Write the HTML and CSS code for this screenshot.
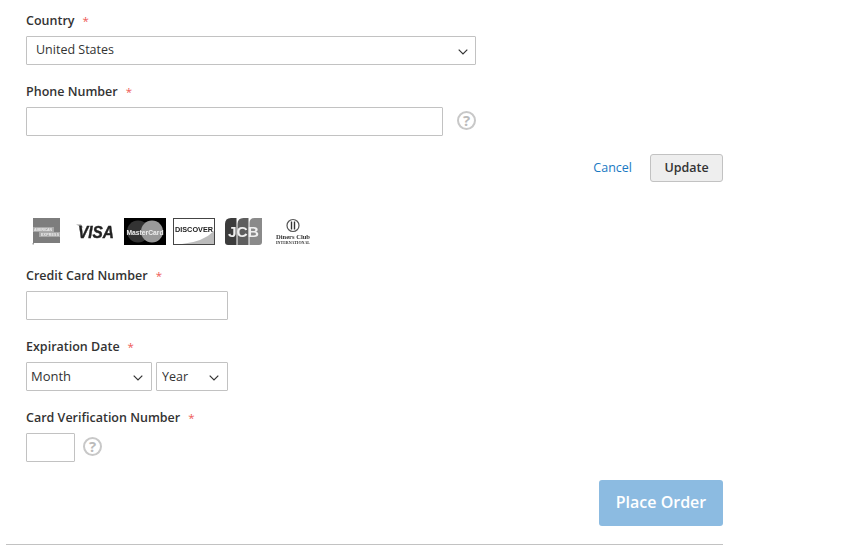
FILE: index.html
```html
<!DOCTYPE html>
<html lang="en">
<head>
<meta charset="utf-8">
<title>Checkout</title>
<link rel="stylesheet" href="styles.css">
</head>
<body>
<main class="checkout">
  <div class="field">
    <label class="label">Country</label>
    <div class="select-wrap select-country">
      <select class="select"><option>United States</option></select>
      <svg class="chevron" viewBox="0 0 10 6"><path d="M.7.7 5 5 9.3.7" fill="none" stroke="#333" stroke-width="1.2"/></svg>
    </div>
  </div>
  <div class="field">
    <label class="label">Phone Number</label>
    <div class="with-help">
      <input class="input input-phone" type="text">
      <span class="help">?</span>
    </div>
  </div>
  <div class="actions">
    <a class="cancel">Cancel</a>
    <button class="update" type="button">Update</button>
  </div>
  <div class="cards">
    <svg class="card" viewBox="0 0 49 27">
      <rect x="7" y="0" width="27" height="25" fill="#7d7d7d"/>
      <rect x="6.500" y="25" width="1.500" height="1.500" fill="#999"/>
      <rect x="7" y="9" width="21" height="5" fill="#a8a8a8"/>
      <rect x="13" y="14" width="21" height="5" fill="#a8a8a8"/>
      <text class="amex-t" x="8" y="13" textLength="18">AMERICAN</text>
      <text class="amex-t" x="15" y="18" textLength="18">EXPRESS</text>
    </svg>
    <svg class="card" viewBox="0 0 49 27">
      <path d="M1 6.500h5l2.500 3.500z" fill="#999"/>
      <text class="visa-t" x="3" y="20" textLength="36" lengthAdjust="spacingAndGlyphs">VISA</text>
    </svg>
    <svg class="card" viewBox="0 0 49 27">
      <rect width="42" height="27" fill="#000"/>
      <circle cx="14" cy="13.500" r="11" fill="#333"/>
      <circle cx="28" cy="13.500" r="11" fill="#999"/>
      <text class="mc-t" x="2.500" y="16.500" textLength="37" lengthAdjust="spacingAndGlyphs">MasterCard</text>
    </svg>
    <svg class="card" viewBox="0 0 49 27">
      <rect x=".5" y=".5" width="41" height="26" fill="#fff" stroke="#444"/>
      <path d="M41 13V26H9Q30 24 41 13z" fill="#bbb"/>
      <text class="disc-t" x="2" y="14" textLength="38" lengthAdjust="spacingAndGlyphs">DISCOVER</text>
    </svg>
    <svg class="card" viewBox="0 0 49 27">
      <path d="M3 6q0-6 6-6h5.500v27H6q-3 0-3-3z" fill="#3c3c3c"/>
      <path d="M15.500 6q0-6 6-6h5v27h-11z" fill="#5e5e5e"/>
      <path d="M27.500 5q0-5 5-5H40v24q0 3-3 3h-9.500z" fill="#8a8a8a"/>
      <text class="jcb-t" x="6" y="18.500" textLength="31" lengthAdjust="spacingAndGlyphs">JCB</text>
    </svg>
    <svg class="card" viewBox="0 0 49 27">
      <circle cx="22" cy="7.500" r="6" fill="#fff" stroke="#555" stroke-width="1.200"/>
      <rect x="19.800" y="3.500" width="1.400" height="8" fill="#333"/>
      <rect x="22.800" y="3.500" width="1.400" height="8" fill="#333"/>
      <text class="din-t" x="5" y="20.500" textLength="34" lengthAdjust="spacingAndGlyphs">Diners Club</text>
      <text class="int-t" x="5" y="25.500" textLength="34" lengthAdjust="spacingAndGlyphs">INTERNATIONAL</text>
    </svg>
  </div>
  <div class="field field-cc">
    <label class="label">Credit Card Number</label>
    <input class="input input-cc" type="text">
  </div>
  <div class="field">
    <label class="label">Expiration Date</label>
    <div class="date-row">
      <div class="select-wrap select-month">
        <select class="select select-small"><option>Month</option></select>
        <svg class="chevron" viewBox="0 0 10 6"><path d="M.7.7 5 5 9.3.7" fill="none" stroke="#333" stroke-width="1.2"/></svg>
      </div>
      <div class="select-wrap select-year">
        <select class="select select-small"><option>Year</option></select>
        <svg class="chevron" viewBox="0 0 10 6"><path d="M.7.7 5 5 9.3.7" fill="none" stroke="#333" stroke-width="1.2"/></svg>
      </div>
    </div>
  </div>
  <div class="field">
    <label class="label">Card Verification Number</label>
    <div class="with-help with-help-cvv">
      <input class="input input-cvv" type="text">
      <span class="help">?</span>
    </div>
  </div>
  <div class="place-row">
    <button class="place" type="button">Place Order</button>
  </div>
  <hr class="rule">
</main>
</body>
</html>
```

FILE: styles.css
```css
* { box-sizing: border-box; }
html, body { margin: 0; padding: 0; background: #fff; }
body {
  font-family: "Open Sans", "Liberation Sans", sans-serif;
  font-size: 13px;
  color: #333;
  overflow: hidden;
}
.checkout {
  width: 717px;
  margin-left: 6px;
  padding: 10px 0 0 20px;
}
.field { margin-bottom: 16px; }
.label {
  display: block;
  height: 20px;
  padding-top: 1px;
  line-height: 20px;
  margin-bottom: 6px;
  font-size: 12.500px;
  font-weight: 600;
}
.label::after {
  content: "*";
  color: #ee5a57;
  font-size: 11.500px;
  font-weight: 400;
  margin-left: 8px;
}
.select-wrap { position: relative; height: 29px; }
.select-country { width: 450px; }
.select-month { width: 126px; }
.select-year { width: 72px; }
.date-row { display: flex; gap: 4px; }
.select {
  appearance: none;
  display: block;
  width: 100%;
  height: 29px;
  padding: 0 25px 3px 9px;
  border: 1px solid #c2c2c2;
  border-radius: 1px;
  background: #fff;
  font: 12.500px "Open Sans", "Liberation Sans", sans-serif;
  color: #333;
}
.select-small { padding: 0 25px 1px 4px; font-size: 13px; }
.select-year .select-small { padding-left: 5px; font-size: 12.500px; }
.chevron {
  position: absolute;
  right: 8px;
  top: 13px;
  width: 10px;
  height: 6px;
}
.select-small + .chevron { right: 9px; }
.input {
  display: block;
  height: 29px;
  border: 1px solid #c2c2c2;
  border-radius: 1px;
  background: #fff;
}
.input-phone { width: 417px; }
.input-cc { width: 202px; }
.input-cvv { width: 49px; }
.with-help { display: flex; align-items: center; gap: 14px; }
.with-help-cvv { gap: 8px; }
.help {
  width: 19px;
  height: 19px;
  margin-top: -2px;
  border: 2px solid #c8c8c8;
  border-radius: 50%;
  color: #bbb;
  font-size: 15px;
  font-weight: 700;
  line-height: 15px;
  text-align: center;
}
.actions {
  display: flex;
  justify-content: flex-end;
  align-items: center;
  gap: 18px;
  margin-top: 18px;
}
.cancel { margin-top: -2px; color: #1979c3; font-size: 12.500px; }
.update {
  width: 73px;
  height: 28px;
  padding: 0 0 2px;
  border: 1px solid #c2c2c2;
  border-radius: 3px;
  background: #eee;
  color: #333;
  font: 600 12.500px "Open Sans", "Liberation Sans", sans-serif;
}
.cards { display: flex; height: 27px; margin: 36px 0 20px; }
.card { width: 49px; height: 27px; flex: none; filter: blur(.5px); }
.amex-t { font: 700 3.500px "Liberation Sans", sans-serif; fill: #eee; }
.visa-t { font: italic 700 17px "Liberation Sans", sans-serif; fill: #222; stroke: #222; stroke-width: .4px; }
.mc-t { font: 700 8px "Liberation Sans", sans-serif; fill: #eee; }
.disc-t { font: 700 8px "Liberation Sans", sans-serif; fill: #222; }
.jcb-t { font: 700 14px "Liberation Sans", sans-serif; fill: #eee; }
.din-t { font: 700 7px "Liberation Serif", serif; fill: #333; }
.int-t { font: 700 4px "Liberation Serif", serif; fill: #333; }
.place-row { display: flex; justify-content: flex-end; margin-top: 18px; }
.place {
  width: 124px;
  height: 46px;
  padding: 0 0 2px;
  border: 0;
  border-radius: 3px;
  background: #8cbbe1;
  color: #fff;
  font: 600 16px "Open Sans", "Liberation Sans", sans-serif;
}
.rule {
  width: 717px;
  height: 1px;
  margin: 18px 0 0 -20px;
  border: 0;
  background: #c2c2c2;
}
```
